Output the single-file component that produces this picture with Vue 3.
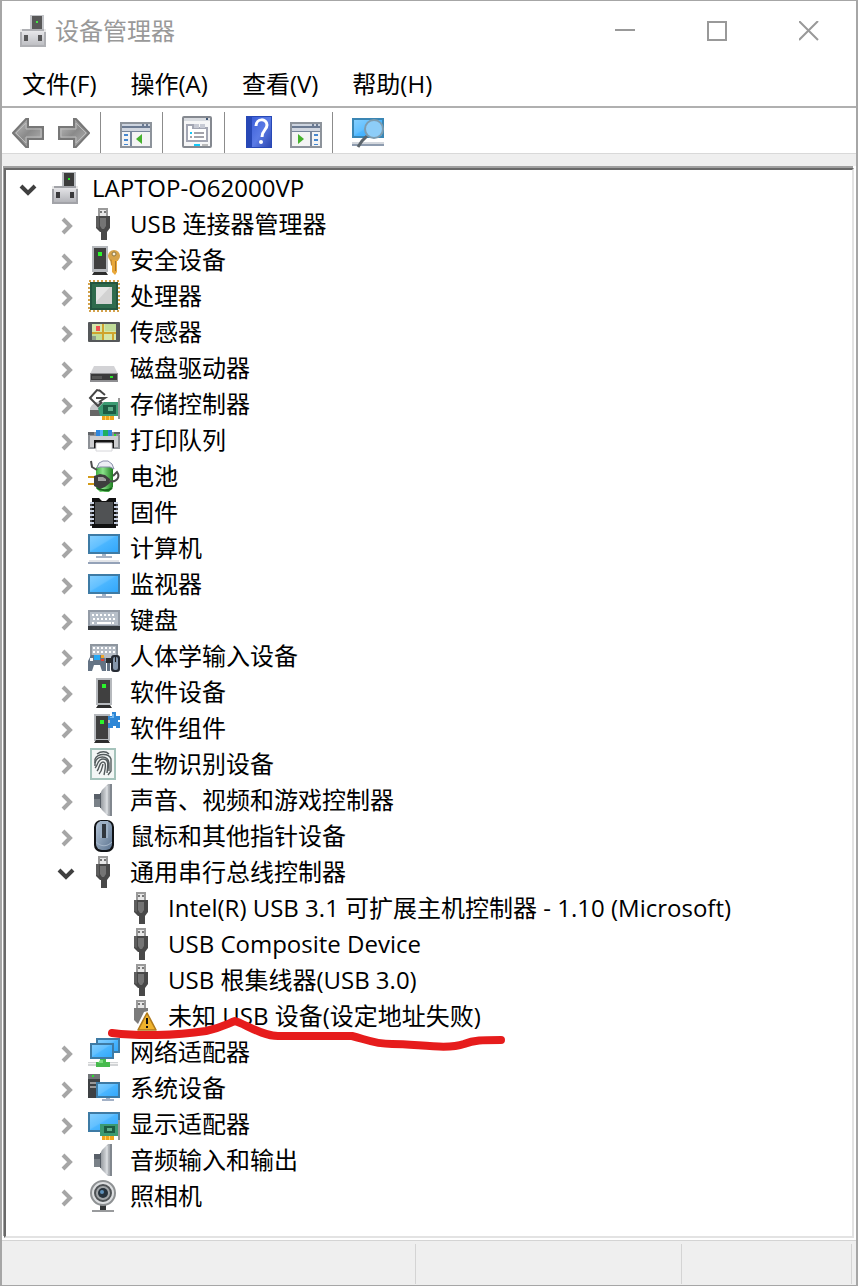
<template>
  <div class="window">
    <!-- Icon sheet -->
    <svg class="sheet" width="0" height="0" aria-hidden="true">
      <defs>
        <linearGradient id="g-screen" x1="0" y1="0" x2="1" y2="1">
          <stop offset="0" stop-color="#86d0ff" />
          <stop offset="0.45" stop-color="#62c0ff" />
          <stop offset="0.5" stop-color="#4bb6ff" />
          <stop offset="1" stop-color="#30a6fa" />
        </linearGradient>
        <linearGradient id="g-metal" x1="0" y1="0" x2="1" y2="0">
          <stop offset="0" stop-color="#8d9297" />
          <stop offset="0.5" stop-color="#cdd0d4" />
          <stop offset="1" stop-color="#8a8f95" />
        </linearGradient>
        <linearGradient id="g-case" x1="0" y1="0" x2="0" y2="1">
          <stop offset="0" stop-color="#e4e4e7" />
          <stop offset="1" stop-color="#b4b5ba" />
        </linearGradient>
        <linearGradient id="g-arrow" x1="0" y1="0" x2="1" y2="1">
          <stop offset="0" stop-color="#c4c4c4" />
          <stop offset="0.5" stop-color="#8a8a8a" />
          <stop offset="1" stop-color="#b8b8b8" />
        </linearGradient>
        <linearGradient id="g-help" x1="0" y1="0" x2="1" y2="1">
          <stop offset="0" stop-color="#3c5fd8" />
          <stop offset="0.5" stop-color="#5b7be6" />
          <stop offset="1" stop-color="#2c47b0" />
        </linearGradient>
        <linearGradient id="g-green" x1="0" y1="0" x2="1" y2="0">
          <stop offset="0" stop-color="#3fae3f" />
          <stop offset="0.4" stop-color="#8be28b" />
          <stop offset="1" stop-color="#1d7f1f" />
        </linearGradient>
        <linearGradient id="g-mouse" x1="0" y1="0" x2="1" y2="1">
          <stop offset="0" stop-color="#b4c4d6" />
          <stop offset="1" stop-color="#5c7490" />
        </linearGradient>
      </defs>

      <symbol id="i-root" viewBox="0 0 32 32">
        <rect x="12" y="0" width="14" height="15" fill="#b9bcc0" />
        <rect x="14" y="1" width="10" height="14" fill="#3c3c3c" />
        <rect x="18" y="6" width="2" height="2" fill="#23e623" />
        <rect x="2" y="14" width="26" height="18" fill="#a2a3a8" />
        <rect x="4" y="16" width="22" height="14" fill="url(#g-case)" />
        <rect x="2" y="14" width="2" height="3" fill="#e6e6e6" />
        <rect x="26" y="14" width="2" height="3" fill="#e6e6e6" />
        <rect x="6" y="20" width="4" height="6" fill="#3a3a3c" />
        <rect x="20" y="20" width="4" height="6" fill="#3a3a3c" />
      </symbol>

      <symbol id="i-usb" viewBox="0 0 32 32">
        <path d="M10 0h10v9H10z" fill="#9a9a9a" />
        <path d="M12 2h6v7h-6z" fill="#e6e6e6" />
        <path d="M12 3h2v2h-2zM16 3h2v2h-2z" fill="#777" />
        <path d="M8 8h14v12l-3 4v8h-6v-8h-1l-4-4z" fill="#484848" />
        <path d="M12 10h6v8l-2 3h-2l-2-3z" fill="#747474" />
        <path d="M8 8h3v12l-3-1z" fill="#5e5e5e" />
      </symbol>

      <symbol id="i-warn" viewBox="0 0 32 32">
        <path d="M10 0h10v9H10z" fill="#9a9a9a" />
        <path d="M12 2h6v7h-6z" fill="#e6e6e6" />
        <path d="M12 3h2v2h-2zM16 3h2v2h-2z" fill="#777" />
        <path d="M8 8h14v3l-4 1-6 12-4-4z" fill="#7b7b7b" />
        <path d="M21 13l9 17H12z" fill="#f0b32c" stroke="#b07a1b" stroke-width="1.6" stroke-linejoin="round" />
        <path d="M20 18h2v6h-2zM20 26h2v2h-2z" fill="#111" />
      </symbol>

      <symbol id="i-tower" viewBox="0 0 32 32">
        <rect x="8" y="2" width="16" height="27" fill="#b6b9bd" />
        <rect x="10" y="4" width="12" height="23" fill="#404040" />
        <rect x="14" y="8" width="4" height="4" fill="#2bf52b" />
        <path d="M10 29h12l2 3H8z" fill="#2d2d2d" />
      </symbol>

      <symbol id="i-security" viewBox="0 0 32 32">
        <rect x="4" y="2" width="16" height="26" fill="#b6b9bd" />
        <rect x="6" y="4" width="12" height="21" fill="#404040" />
        <rect x="10" y="8" width="4" height="4" fill="#2bf52b" />
        <path d="M6 28h12l2 3H4z" fill="#2d2d2d" />
        <circle cx="26" cy="12" r="6" fill="#d6a34a" />
        <circle cx="26" cy="10" r="2" fill="#f8eed6" stroke="#8d763f" />
        <path d="M24 16h5v12l-2 3-3-3z" fill="#e9a83a" />
        <path d="M27 17h1v10h-1z" fill="#a9742a" />
        <path d="M22 15l2 1v6l-1-1z" fill="#c48b33" />
      </symbol>

      <symbol id="i-cpu" viewBox="0 0 32 32">
        <rect x="1" y="1" width="30" height="30" fill="none" stroke="#d3a24c" stroke-width="2" stroke-dasharray="2 2" />
        <rect x="2" y="2" width="28" height="28" fill="#2f6b4d" />
        <rect x="3" y="3" width="26" height="26" fill="none" stroke="#235540" stroke-width="2" />
        <rect x="8" y="7" width="16" height="17" fill="#d2d2d2" />
        <path d="M8 7h14L8 22z" fill="#e5e5e5" />
      </symbol>

      <symbol id="i-sensor" viewBox="0 0 32 32">
        <rect x="0" y="6" width="32" height="20" rx="1" fill="#55585a" />
        <rect x="4" y="8" width="24" height="16" fill="#d5e6a8" />
        <path d="M17 8h11v7H17zM4 16h10v8H4z" fill="#c0dc98" />
        <path d="M14 8h2v16h-2zM4 16h24v2H4zM24 18h2v6h-2z" fill="#cfa32d" />
        <rect x="8" y="10" width="4" height="5" fill="#ef5050" />
        <rect x="4" y="20" width="4" height="4" fill="#8fa08a" />
      </symbol>

      <symbol id="i-disk" viewBox="0 0 32 32">
        <path d="M6 14h20l4 8H2z" fill="#d3d3d6" />
        <rect x="2" y="21" width="28" height="9" fill="#8f8f92" />
        <rect x="3" y="22" width="26" height="6" fill="#3a3a3b" />
        <rect x="4" y="24" width="10" height="3" fill="#555" />
        <rect x="22" y="24" width="3" height="2" fill="#2be02b" />
      </symbol>

      <symbol id="i-storage" viewBox="0 0 32 32">
        <path d="M4 17l4-3h14l2 6v8H2v-8z" fill="#c8c9cc" />
        <path d="M2 22h12v6H2z" fill="#666" />
        <path d="M13 3L9 2 2 10l8 8 4-4M8 10h9l-6 4M11 2l6 5" fill="none" stroke="#454545" stroke-width="2" />
        <path d="M10 20l6-6h14v14H12z" fill="#3b9a72" />
        <path d="M15 17h13v9H15z" fill="#1d5c44" />
        <path d="M20 19h5v4h-5z" fill="#5fae8b" />
        <path d="M14 28h12v4H14z" fill="#efa51d" />
        <path d="M17 28h1v4h-1zM21 28h1v4h-1z" fill="#ffd565" />
        <path d="M30 10h2v21h-2z" fill="#999" />
      </symbol>

      <symbol id="i-printer" viewBox="0 0 32 32">
        <path d="M2 8h28l2 3v14H0V11z" fill="#8d9196" />
        <path d="M8 6h16v7H8z" fill="#2e86dd" />
        <path d="M15 6h5v7h-5z" fill="#20b05d" />
        <path d="M12 6h3v7h-3z" fill="#53b2ff" />
        <path d="M2 12h28v11H2z" fill="#cdced1" />
        <path d="M0 8h6v3H0zM26 8h6v2h-6z" fill="#606469" />
        <path d="M26 10h2v2h-2z" fill="#2be02b" />
        <path d="M6 16h20v8H6z" fill="#161616" />
        <path d="M8 19h16v8H8z" fill="#fff" stroke="#d6d6da" />
      </symbol>

      <symbol id="i-battery" viewBox="0 0 32 32">
        <path d="M8 8l3-5h10l4 5v19l-4 5H12l-4-4z" fill="url(#g-green)" />
        <path d="M9 8l2-5 4-2h5l4 3 2 5-4-2H12z" fill="#eceef4" stroke="#8a8fab" />
        <path d="M9 28c4 3 12 3 15 0" fill="none" stroke="#17691a" stroke-width="2" />
        <path d="M0 17h7M0 24h7" stroke="#d39b18" stroke-width="2" />
        <path d="M6 16l6-2 5 1 5 4v4l-5 4-5 2-6-3z" fill="#3e3e3e" />
        <path d="M10 17h5l3 2v2h-8z" fill="#a0a0a0" />
        <path d="M21 21c9 2 11-5 8-9l-4 4M3 1l1 6 5 3" fill="none" stroke="#4c4c4c" stroke-width="2" />
      </symbol>

      <symbol id="i-chip" viewBox="0 0 32 32">
        <path d="M4 2h7l3 3h4l3-3h7v30H4z" fill="#111" />
        <path d="M7 6h18v22H7z" fill="#505254" />
        <path d="M3 6v24M29 6v24" stroke="#444" stroke-width="2" />
        <path d="M4 6v24M28 6v24" stroke="#c9d1e2" stroke-width="4" stroke-dasharray="2 2" />
      </symbol>

      <symbol id="i-computer" viewBox="0 0 32 32">
        <rect x="1" y="3" width="30" height="18" fill="url(#g-screen)" stroke="#3e7ba5" stroke-width="2" />
        <path d="M14 22h4v2h6v2H8v-2h6z" fill="#a6b3c5" />
        <path d="M1 28h30v2H1z" fill="#e3e5e9" />
        <path d="M0 30h32v2H0z" fill="#94a2b8" />
      </symbol>

      <symbol id="i-monitor" viewBox="0 0 32 32">
        <rect x="1" y="7" width="30" height="18" fill="url(#g-screen)" stroke="#3e7ba5" stroke-width="2" />
        <path d="M14 26h4v2h6v2H8v-2h6z" fill="#a3b1c6" />
      </symbol>

      <symbol id="i-keyboard" viewBox="0 0 32 32">
        <rect x="0" y="6" width="32" height="17" fill="#939ba6" />
        <rect x="2" y="8" width="28" height="13" fill="#b7bfc9" />
        <path d="M4 11h24M5 15h22M4 19h4M24 19h4" stroke="#fff" stroke-width="2" stroke-dasharray="2 2" />
        <path d="M9 19h14" stroke="#fff" stroke-width="2" />
        <path d="M0 22h32v4H0z" fill="#33383d" />
      </symbol>

      <symbol id="i-hid" viewBox="0 0 32 32">
        <rect x="2" y="4" width="28" height="16" fill="#8e969f" />
        <rect x="4" y="6" width="24" height="12" fill="#b6bdc6" />
        <path d="M5 8h22M5 12h22" stroke="#fff" stroke-width="2" stroke-dasharray="2 2" />
        <path d="M18 18h12v5H18z" fill="#2a2d30" />
        <path d="M3 15h12l3 6v10h-4l-2-6H6l-2 6H0V21z" fill="#647384" />
        <path d="M6 15h6v5H6z" fill="#27a9f5" />
        <path d="M2 18h3v3H2z" fill="#f4f6f8" />
        <path d="M13 15h3v3h-3z" fill="#f0a72b" />
        <path d="M13 19h3v2h-3z" fill="#dd3f36" />
        <path d="M19 23h3v8h-3z" fill="#647384" />
        <rect x="23" y="15" width="9" height="17" rx="3" fill="#252a33" />
        <rect x="25" y="17" width="5" height="13" rx="2" fill="#8495a9" />
        <path d="M27 17h1v5h-1z" fill="#222" />
      </symbol>

      <symbol id="i-component" viewBox="0 0 32 32">
        <rect x="6" y="2" width="16" height="27" fill="#b6b9bd" />
        <rect x="8" y="4" width="12" height="23" fill="#404040" />
        <rect x="12" y="8" width="4" height="4" fill="#2bf52b" />
        <path d="M8 28h12l2 3H6z" fill="#2d2d2d" />
        <path d="M24 0h4v4h4v4h-2v2h2v6h-4v-2h-3v2h-5v-5h2V8h-2V4h4z" fill="#2f87d6" />
        <path d="M24 2h2v4h-4v-1h2z" fill="#72b8f0" />
      </symbol>

      <symbol id="i-finger" viewBox="0 0 32 32">
        <rect x="3" y="1" width="24" height="30" fill="#f4f7f6" stroke="#a5c3bb" stroke-width="2" />
        <g fill="none" stroke="#535a5c" stroke-width="1.4">
          <path d="M9 6c4-3 9-3 12 0M7 11c3-6 14-6 16 0v6M7 15c2-8 13-8 14 0v8M7 20c3-2 2-9 8-9s5 6 4 14M9 23c3-3 2-9 6-9s2 8 1 13M11 26c3-3 3-6 4-10" />
          <path d="M7 11v7M23 17v6l-3 4" />
        </g>
      </symbol>

      <symbol id="i-speaker" viewBox="0 0 32 32">
        <path d="M12 10l2-4 6-6h4v32h-4l-6-6-2-3z" fill="url(#g-metal)" />
        <path d="M6 10h6v13H6z" fill="#7a8188" />
        <path d="M6 10h6v5H6z" fill="#596069" />
        <path d="M12 9h1v15h-1z" fill="#555c64" />
        <path d="M19 2v28" stroke="#e6e9ec" stroke-width="1" />
        <path d="M22 0h2v32h-2z" fill="#81878e" />
      </symbol>

      <symbol id="i-mouse" viewBox="0 0 32 32">
        <rect x="6" y="0" width="20" height="32" rx="7" fill="#101215" />
        <rect x="8" y="1" width="16" height="29" rx="6" fill="url(#g-mouse)" />
        <path d="M12 1h8v17h-8z" fill="#9db0c5" />
        <path d="M14 4h4v14h-4z" fill="#30363d" />
        <path d="M8 22c5 5 11 5 16 0" fill="none" stroke="#a5b6c9" />
      </symbol>

      <symbol id="i-network" viewBox="0 0 32 32">
        <rect x="9" y="3" width="22" height="13" fill="url(#g-screen)" stroke="#3e7ba5" stroke-width="2" />
        <rect x="3" y="8" width="22" height="14" fill="url(#g-screen)" stroke="#3e7ba5" stroke-width="2" />
        <path d="M0 26h30v4H0z" fill="#d2d4d6" />
        <path d="M0 27h30v1H0z" fill="#f3f3f3" />
        <path d="M12 23h6v3h4v5H8v-5h4z" fill="#47ba4e" />
        <path d="M12 24h3v3h-5z" fill="#7adc7e" />
      </symbol>

      <symbol id="i-system" viewBox="0 0 32 32">
        <rect x="0" y="2" width="12" height="24" fill="#3d4043" />
        <path d="M0 2h12v5H0z" fill="#707477" />
        <rect x="4" y="3" width="2" height="2" fill="#2be02b" />
        <path d="M2 11h8M2 15h6" stroke="#999" stroke-width="2" />
        <rect x="9" y="11" width="22" height="14" fill="url(#g-screen)" stroke="#3e7ba5" stroke-width="2" />
        <path d="M18 26h4v1h4v2H14v-2h4z" fill="#a3b1c6" />
      </symbol>

      <symbol id="i-display" viewBox="0 0 32 32">
        <rect x="1" y="5" width="30" height="18" fill="url(#g-screen)" stroke="#3e7ba5" stroke-width="2" />
        <path d="M12 16h18v12H12z" fill="#3b9a72" />
        <path d="M16 18h11v7H16z" fill="#1d5c44" />
        <path d="M19 20h5v3h-5z" fill="#5fae8b" />
        <path d="M14 28h12v4H14z" fill="#efa51d" />
        <path d="M17 28h1v4h-1zM21 28h1v4h-1z" fill="#ffd565" />
        <path d="M30 12h2v20h-2z" fill="#999" />
      </symbol>

      <symbol id="i-camera" viewBox="0 0 32 32">
        <path d="M12 24h6v6h-6z" fill="#343638" />
        <path d="M4 30h22v2H4z" fill="#999b9d" />
        <circle cx="15" cy="13" r="12" fill="#dcdee0" stroke="#8e9193" stroke-width="2" />
        <circle cx="15" cy="13" r="8" fill="#a1a5a8" stroke="#4f5356" stroke-width="2" />
        <circle cx="15" cy="13" r="5" fill="#26323c" />
        <circle cx="14" cy="12" r="2" fill="#5d8fb9" />
      </symbol>

      <symbol id="i-back" viewBox="0 0 32 32">
        <path d="M1 17L14 3h2v8h15v12H16v8h-2z" fill="url(#g-arrow)" stroke="#777" stroke-width="2" />
        <path d="M4 17l10-10v6h15v8H14v6z" fill="none" stroke="#bbb" stroke-width="1" />
      </symbol>
      <symbol id="i-forward" viewBox="0 0 32 32">
        <path d="M31 17L18 3h-2v8H1v12h15v8h2z" fill="url(#g-arrow)" stroke="#777" stroke-width="2" />
        <path d="M28 17L18 7v6H3v8h15v6z" fill="none" stroke="#bbb" stroke-width="1" />
      </symbol>
      <symbol id="i-tree" viewBox="0 0 32 32">
        <rect x="1" y="7" width="30" height="24" fill="#f4f4f4" stroke="#8d939b" stroke-width="2" />
        <path d="M2 8h28v2H2z" fill="#cdd4df" />
        <path d="M2 10h28v2H2zM22 8h2v2h-2zM26 8h2v2h-2z" fill="#6b7a92" />
        <path d="M2 12h28v4H2z" fill="#d1d6df" />
        <path d="M2 15h28v1H2zM10 16h2v14h-2z" fill="#77869c" />
        <path d="M4 18h4v2H4zM4 23h4v2H4zM4 28h4v1H4z" fill="#4587cf" />
        <path d="M22 18v10l-6-5z" fill="#46b22d" />
      </symbol>
      <symbol id="i-props" viewBox="0 0 32 32">
        <rect x="1" y="1" width="28" height="30" rx="1" fill="#f6f6f7" stroke="#858990" stroke-width="2" />
        <path d="M2 2h26v3H2z" fill="#d9dce1" />
        <path d="M24 2h2v2h-2z" fill="#3f5674" />
        <path d="M5 9h6v3h14v13H5z" fill="#fff" stroke="#a3a6b3" stroke-width="2" />
        <path d="M12 8h5v4h-5zM18 8h5v4h-5z" fill="#c7cad4" />
        <path d="M8 16h2v2H8z" fill="#13c7f7" />
        <path d="M8 20h2v2H8zM12 16h10v2H12zM12 20h10v2H12z" fill="#a3a3ab" />
        <path d="M12 28h6v2h-6z" fill="#13c7f7" />
        <path d="M20 28h6v2h-6z" fill="#bbb" />
      </symbol>
      <symbol id="i-help" viewBox="0 0 32 32">
        <rect x="2" y="0" width="26" height="32" fill="#2748b6" />
        <rect x="8" y="1" width="19" height="30" fill="url(#g-help)" />
        <path d="M12 10c0-8 11-8 11-1 0 5-5 5-5 12" fill="none" stroke="#fff" stroke-width="3" />
        <circle cx="17" cy="26" r="2" fill="#fff" />
      </symbol>
      <symbol id="i-action" viewBox="0 0 32 32">
        <rect x="1" y="7" width="30" height="24" fill="#f4f4f4" stroke="#8d939b" stroke-width="2" />
        <path d="M2 8h28v2H2z" fill="#cdd4df" />
        <path d="M2 10h28v2H2zM22 8h2v2h-2zM26 8h2v2h-2z" fill="#6b7a92" />
        <path d="M2 12h28v4H2z" fill="#d1d6df" />
        <path d="M2 15h28v1H2zM20 16h2v14h-2z" fill="#77869c" />
        <path d="M24 18h4v2h-4zM24 23h4v2h-4zM24 28h4v1h-4z" fill="#4587cf" />
        <path d="M8 18v10l6-5z" fill="#46b22d" />
      </symbol>
      <symbol id="i-scan" viewBox="0 0 32 32">
        <rect x="1" y="3" width="30" height="18" fill="url(#g-screen)" stroke="#3a86b4" stroke-width="2" />
        <path d="M0 26h32v2H0z" fill="#d3d7dd" />
        <path d="M0 28h32v2H0z" fill="#8e9caf" />
        <path d="M15 20l-5 5-4 6" fill="none" stroke="#5c656c" stroke-width="3" />
        <circle cx="22" cy="13" r="9" fill="#8dcdf8" stroke="#7d9caf" stroke-width="2" />
      </symbol>
    </svg>

    <!-- Title bar -->
    <header class="titlebar">
      <svg class="icon faded" aria-hidden="true"><use href="#i-root" /></svg>
      <h1>设备管理器</h1>
      <div class="controls">
        <button type="button" aria-label="最小化">
          <svg viewBox="0 0 20 20"><path d="M0 9h20" /></svg>
        </button>
        <button type="button" aria-label="最大化">
          <svg viewBox="0 0 20 20"><path d="M1 1h18v18H1z" /></svg>
        </button>
        <button type="button" aria-label="关闭">
          <svg viewBox="0 0 20 20"><path d="M0 0l19 19M19 0L0 19" /></svg>
        </button>
      </div>
    </header>

    <!-- Menu -->
    <nav class="menu">
      <button v-for="m in menus" :key="m" type="button">{{ m }}</button>
    </nav>

    <!-- Toolbar -->
    <div class="toolbar" role="toolbar" aria-label="工具栏">
      <div v-for="(group, i) in tools" :key="i" class="group">
        <button v-for="t in group" :key="t.icon" type="button" :aria-label="t.label">
          <svg class="icon" aria-hidden="true"><use :href="'#i-' + t.icon" /></svg>
        </button>
      </div>
    </div>

    <!-- Device tree -->
    <main class="panel">
      <ul class="tree" role="tree" aria-label="设备">
        <li
          v-for="row in rows"
          :key="row.name"
          class="row"
          :class="'level-' + row.level"
          role="treeitem"
          :aria-level="row.level + 1"
          :aria-expanded="row.leaf ? undefined : row.open"
        >
          <button
            v-if="!row.leaf"
            class="toggle"
            :class="{ open: row.open }"
            type="button"
            :aria-label="row.open ? '折叠' : '展开'"
            @click="toggle(row.name)"
          >
            <svg v-if="row.open" viewBox="0 0 28 28"><path d="M7 12l7 7 7-7" /></svg>
            <svg v-else viewBox="0 0 28 28"><path d="M11 9l7 7-7 7" /></svg>
          </button>
          <svg class="icon" aria-hidden="true"><use :href="'#i-' + row.icon" /></svg>
          <span class="name">{{ row.name }}</span>
          <!-- Hand-drawn marker under the failing device -->
          <svg v-if="row.marked" class="marker" viewBox="0 0 408 40" aria-hidden="true">
            <path d="M10 20C35 23 72 23 104 18C118 15 123 12 133 8C143 11 160 23 176 23L250 23C263 26 272 31 290 31C315 31 345 37 362 31C372 27 380 27 399 27" />
          </svg>
        </li>
      </ul>
    </main>

    <!-- Status bar -->
    <footer class="status">
      <span></span>
      <span></span>
      <span></span>
    </footer>
  </div>
</template>

<script setup>
import { computed, ref } from "vue";

const menus = ["文件(F)", "操作(A)", "查看(V)", "帮助(H)"];

const tools = [
  [
    { icon: "back", label: "后退" },
    { icon: "forward", label: "前进" },
  ],
  [{ icon: "tree", label: "显示/隐藏控制台树" }],
  [{ icon: "props", label: "属性" }],
  [
    { icon: "help", label: "帮助" },
    { icon: "action", label: "显示/隐藏操作窗格" },
  ],
  [{ icon: "scan", label: "扫描检测硬件改动" }],
];

const root = "LAPTOP-O62000VP";

const categories = [
  { name: "USB 连接器管理器", icon: "usb" },
  { name: "安全设备", icon: "security" },
  { name: "处理器", icon: "cpu" },
  { name: "传感器", icon: "sensor" },
  { name: "磁盘驱动器", icon: "disk" },
  { name: "存储控制器", icon: "storage" },
  { name: "打印队列", icon: "printer" },
  { name: "电池", icon: "battery" },
  { name: "固件", icon: "chip" },
  { name: "计算机", icon: "computer" },
  { name: "监视器", icon: "monitor" },
  { name: "键盘", icon: "keyboard" },
  { name: "人体学输入设备", icon: "hid" },
  { name: "软件设备", icon: "tower" },
  { name: "软件组件", icon: "component" },
  { name: "生物识别设备", icon: "finger" },
  { name: "声音、视频和游戏控制器", icon: "speaker" },
  { name: "鼠标和其他指针设备", icon: "mouse" },
  {
    name: "通用串行总线控制器",
    icon: "usb",
    devices: [
      { name: "Intel(R) USB 3.1 可扩展主机控制器 - 1.10 (Microsoft)", icon: "usb" },
      { name: "USB Composite Device", icon: "usb" },
      { name: "USB 根集线器(USB 3.0)", icon: "usb" },
      { name: "未知 USB 设备(设定地址失败)", icon: "warn", marked: true },
    ],
  },
  { name: "网络适配器", icon: "network" },
  { name: "系统设备", icon: "system" },
  { name: "显示适配器", icon: "display" },
  { name: "音频输入和输出", icon: "speaker" },
  { name: "照相机", icon: "camera" },
];

const opened = ref([root, "通用串行总线控制器"]);

function toggle(name) {
  opened.value = opened.value.includes(name)
    ? opened.value.filter((n) => n !== name)
    : [...opened.value, name];
}

// Flat list of the rows that are visible right now
const rows = computed(() => {
  const isOpen = (name) => opened.value.includes(name);
  const list = [{ name: root, icon: "root", level: 0, open: isOpen(root) }];
  if (!isOpen(root)) return list;

  for (const c of categories) {
    list.push({ name: c.name, icon: c.icon, level: 1, open: isOpen(c.name) });
    if (!isOpen(c.name)) continue;
    for (const d of c.devices ?? []) list.push({ ...d, level: 2, leaf: true });
  }
  return list;
});
</script>

<style>
body {
  background: #fff;
}
</style>

<style scoped>
.window {
  box-sizing: border-box;
  min-height: 100vh;
  display: flex;
  flex-direction: column;
  border: 2px solid #a6a6a6;
  border-top-width: 1px;
  border-bottom-width: 1px;
  background: #fff;
  color: #000;
  font-family: "Open Sans", "Noto Sans CJK SC", sans-serif;
  font-size: 24px;
  line-height: 36px;
}

button {
  padding: 0;
  border: 0;
  background: none;
  color: inherit;
  font: inherit;
}

.sheet {
  position: absolute;
}

.icon {
  display: block;
  flex: none;
  width: 32px;
  height: 32px;
}

/* Title bar */
.titlebar {
  display: flex;
  align-items: center;
  height: 60px;
  padding: 0 1px 0 16px;
}
.titlebar h1 {
  flex: 1;
  margin: 0 0 0 5px;
  color: #999;
  font-size: 24px;
  font-weight: 400;
}
.faded {
  opacity: 0.85;
}
.controls {
  display: flex;
}
.controls button {
  display: grid;
  place-items: center;
  width: 92px;
  height: 60px;
}
.controls svg {
  width: 20px;
  height: 20px;
  fill: none;
  stroke: #999;
  stroke-width: 2;
}

/* Menu */
.menu {
  display: flex;
  gap: 34px;
  padding: 5px 20px 4px;
  border-bottom: 2px solid #b0b0b0;
}

/* Toolbar */
.toolbar {
  display: flex;
  padding: 4px 10px 0;
  border-bottom: 1px solid #d9d9d9;
}
.group {
  display: flex;
  gap: 14px;
  margin-right: 19px;
  padding: 4px 10px 5px 0;
  border-right: 1px solid #8c8c8c;
}
.group:last-child {
  border-right: 0;
}

/* Device tree */
.panel {
  flex: 1;
  padding: 14px 2px 2px;
  background: linear-gradient(#efefef 12px, #fff 12px);
  display: flex;
}
.tree {
  flex: 1;
  margin: 0;
  padding: 0 0 22px 8px;
  list-style: none;
  border: 2px solid #696969;
  border-right-color: #e3e3e3;
  border-bottom-color: #e3e3e3;
  box-shadow: -1px -2px 0 #a0a0a0;
}
.row {
  position: relative;
  display: flex;
  align-items: center;
  height: 36px;
}
.level-1 {
  padding-left: 38px;
}
.level-2 {
  padding-left: 112px;
}
.toggle {
  width: 28px;
  height: 28px;
  margin-right: 8px;
}
.toggle svg {
  display: block;
  fill: none;
  stroke: #a6a6a6;
  stroke-width: 4;
}
.toggle.open svg {
  stroke: #404040;
}
.name {
  margin-left: 10px;
  white-space: nowrap;
}
.marker {
  position: absolute;
  left: 88px;
  top: 15px;
  z-index: 1;
  width: 408px;
  height: 40px;
  fill: none;
  stroke: #e61c1c;
  stroke-width: 8;
  stroke-linecap: round;
  stroke-linejoin: round;
  pointer-events: none;
}

/* Status bar */
.status {
  display: grid;
  grid-template-columns: 414px 266px 1fr;
  height: 40px;
  padding: 3px 4px 1px 0;
  border-top: 1px solid #d4d4d4;
  background: #efefef;
}
.status span {
  border-right: 1px solid #d4d4d4;
}
</style>
